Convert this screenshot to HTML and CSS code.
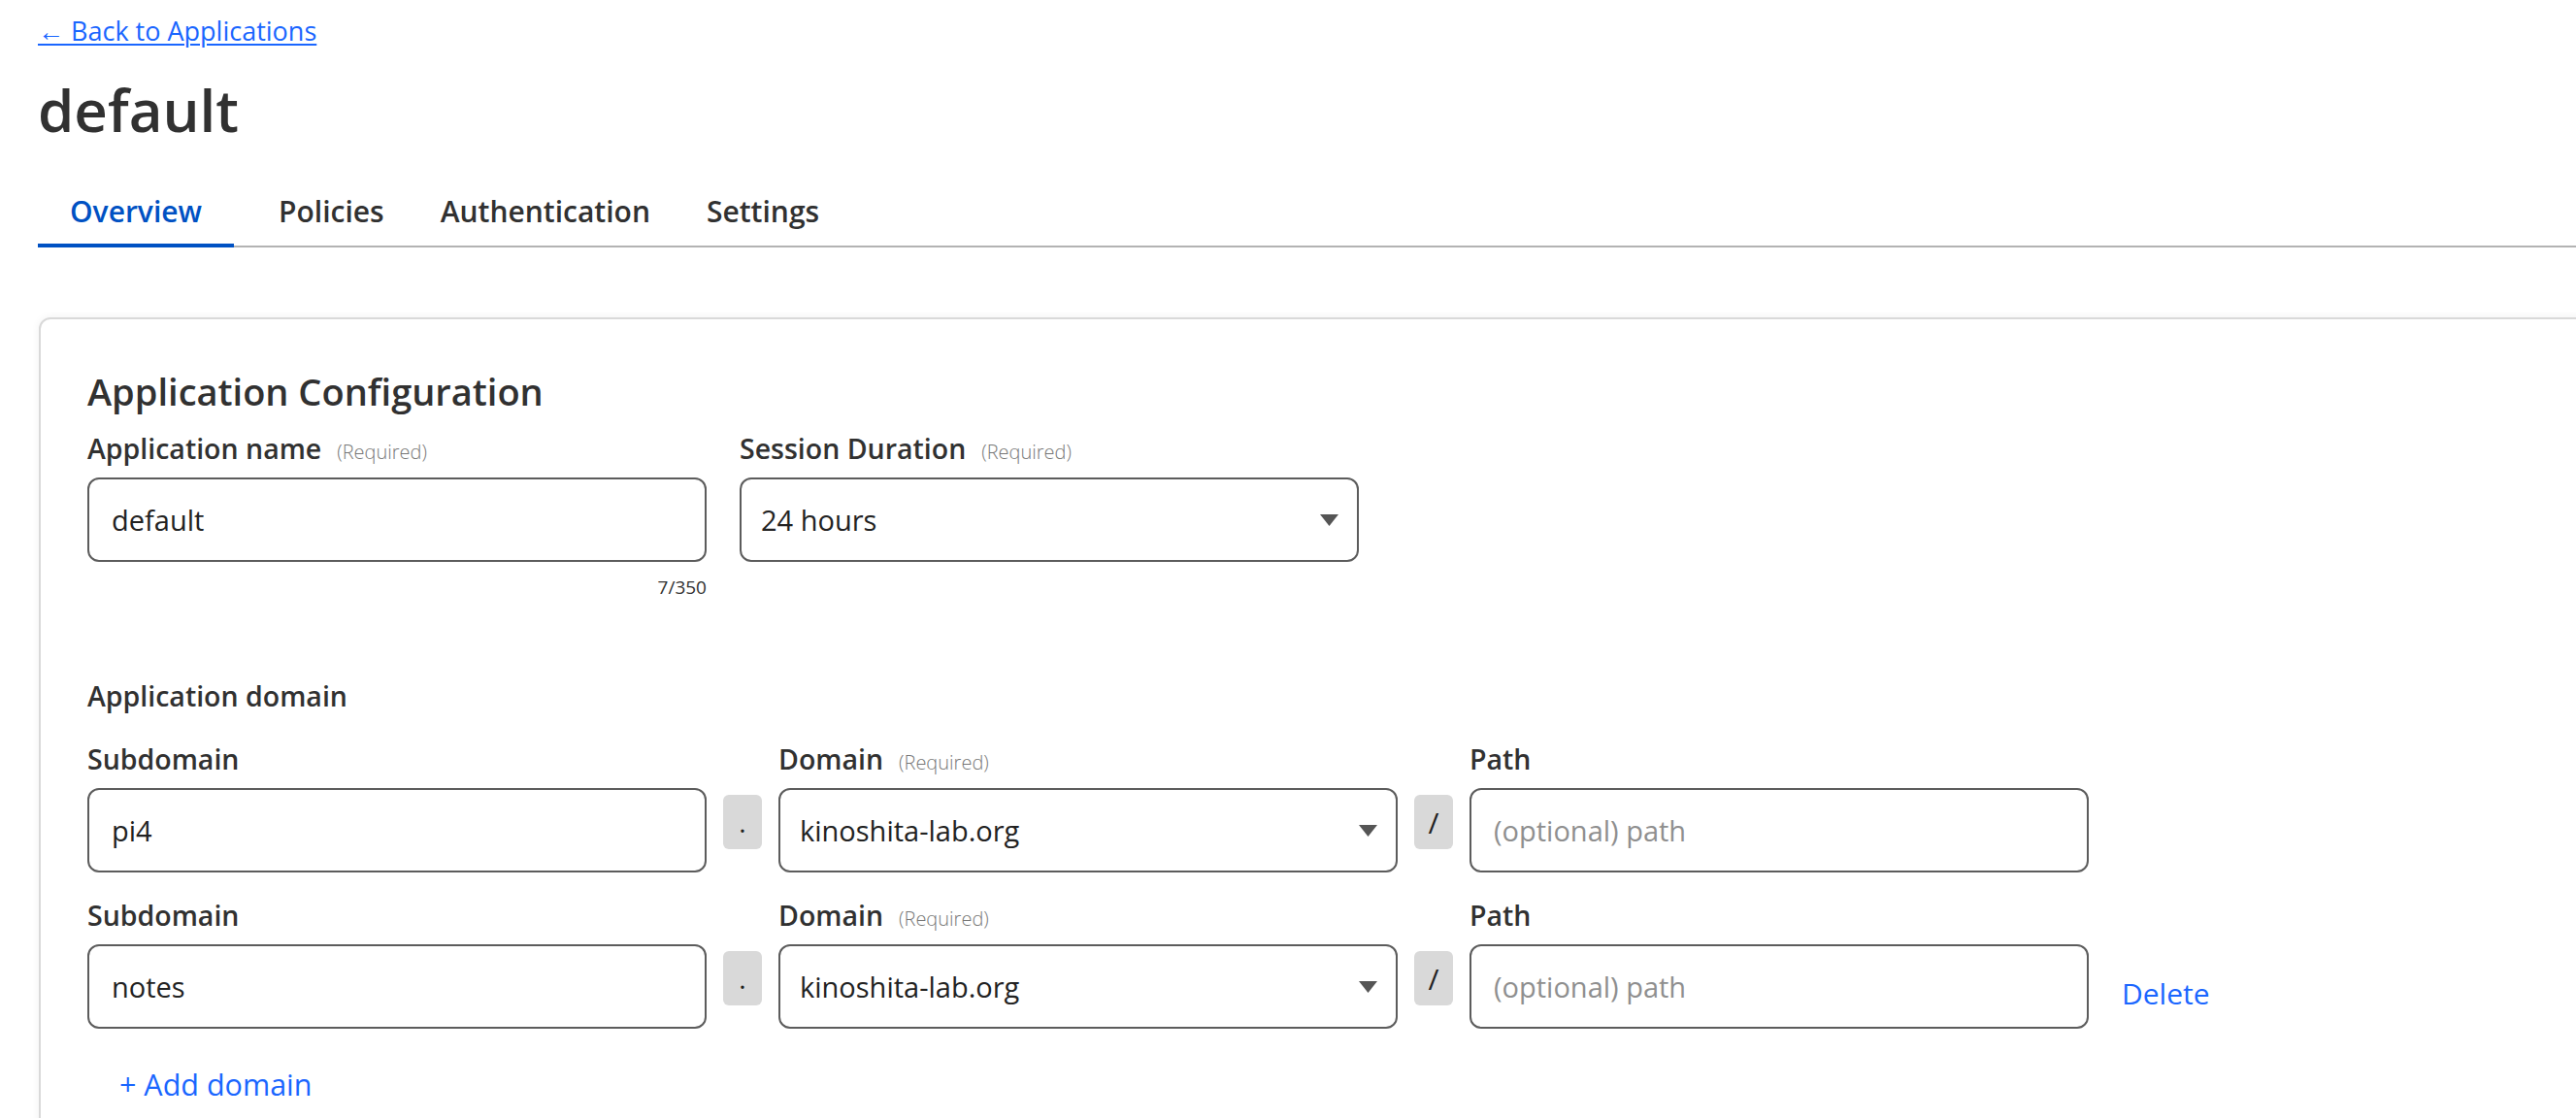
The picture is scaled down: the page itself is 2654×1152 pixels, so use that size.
FILE: index.html
```html
<!DOCTYPE html>
<html lang="en">
<head>
<meta charset="utf-8">
<title>default</title>
<link rel="stylesheet" href="styles.css">
</head>
<body>
<div class="page">
  <a class="back" href="#">← Back to Applications</a>
  <h1 class="title">default</h1>
  <nav class="tabs">
    <a class="tab active" href="#">Overview</a>
    <a class="tab" href="#">Policies</a>
    <a class="tab" href="#">Authentication</a>
    <a class="tab" href="#">Settings</a>
  </nav>
  <section class="card">
    <h2 class="card-title">Application Configuration</h2>
    <div class="row-top">
      <div class="field">
        <label class="label">Application name<span class="req">(Required)</span></label>
        <input class="input" type="text" value="default">
        <div class="counter">7/350</div>
      </div>
      <div class="field">
        <label class="label">Session Duration<span class="req">(Required)</span></label>
        <div class="select">
          <span>24 hours</span>
          <svg class="caret" width="19" height="12" viewBox="0 0 19 12"><polygon points="0,0 19,0 9.5,12" fill="#555"/></svg>
        </div>
      </div>
    </div>

    <div class="section-label">Application domain</div>

    <div class="domain-row first">
      <div class="field">
        <label class="label">Subdomain</label>
        <input class="input" type="text" value="pi4">
      </div>
      <div class="sep">.</div>
      <div class="field">
        <label class="label">Domain<span class="req">(Required)</span></label>
        <div class="select">
          <span>kinoshita-lab.org</span>
          <svg class="caret" width="19" height="12" viewBox="0 0 19 12"><polygon points="0,0 19,0 9.5,12" fill="#555"/></svg>
        </div>
      </div>
      <div class="sep slash">/</div>
      <div class="field">
        <label class="label">Path</label>
        <input class="input" type="text" placeholder="(optional) path">
      </div>
    </div>

    <div class="domain-row second">
      <div class="field">
        <label class="label">Subdomain</label>
        <input class="input" type="text" value="notes">
      </div>
      <div class="sep">.</div>
      <div class="field">
        <label class="label">Domain<span class="req">(Required)</span></label>
        <div class="select">
          <span>kinoshita-lab.org</span>
          <svg class="caret" width="19" height="12" viewBox="0 0 19 12"><polygon points="0,0 19,0 9.5,12" fill="#555"/></svg>
        </div>
      </div>
      <div class="sep slash">/</div>
      <div class="field">
        <label class="label">Path</label>
        <input class="input" type="text" placeholder="(optional) path">
      </div>
      <a class="delete" href="#">Delete</a>
    </div>

    <a class="add" href="#">+ Add domain</a>
  </section>
</div>
</body>
</html>
```

FILE: styles.css
```css
* {
  box-sizing: border-box;
}

html,
body {
  margin: 0;
  background: #ffffff;
}

body {
  font-family: "Open Sans", "Liberation Sans", "DejaVu Sans", sans-serif;
  color: #313131;
  overflow: hidden;
}

.page {
  padding: 14px 0 0 39px;
}

.back {
  display: block;
  width: fit-content;
  font-size: 27px;
  line-height: 36px;
  color: #1a66ff;
  text-decoration: underline;
  text-decoration-thickness: 2px;
  text-underline-offset: 3px;
}

.title {
  margin: 23px 0 0;
  font-size: 60px;
  line-height: 80px;
  font-weight: 600;
  color: #313131;
}

.tabs {
  display: flex;
  margin-top: 45px;
  border-bottom: 2px solid #b3b3b3;
}

.tab {
  font-size: 30px;
  line-height: 40px;
  font-weight: 600;
  color: #313131;
  text-decoration: none;
  padding: 0 29px 13px;
  border-bottom: 4px solid transparent;
  margin-bottom: -2px;
}

.tab.active {
  color: #0051c3;
  border-bottom-color: #0051c3;
  padding: 0 33px 13px;
  margin-right: 17px;
}

.card {
  margin: 72px -80px 0 1px;
  border: 2px solid #d9d9d9;
  border-radius: 12px;
  padding: 49px 48px 60px;
  box-shadow: 0 0 8px rgba(0, 0, 0, 0.06);
  background: #ffffff;
}

.card-title {
  margin: 0 0 16px;
  font-size: 38px;
  line-height: 50px;
  font-weight: 600;
  color: #313131;
}

.row-top {
  display: flex;
  gap: 34px;
}

.field {
  width: 638px;
  flex: none;
}

.label {
  display: block;
  height: 36px;
  font-size: 28.5px;
  line-height: 36px;
  font-weight: 600;
  color: #313131;
  margin-bottom: 12px;
  white-space: nowrap;
}

.req {
  font-size: 20px;
  line-height: 20px;
  font-weight: 300;
  color: #777777;
  margin-left: 16px;
}

.input {
  display: block;
  width: 100%;
  height: 87px;
  margin: 0;
  border: 2px solid #5c5c5c;
  border-radius: 12px;
  padding: 0 23px;
  font-family: "Open Sans", "Liberation Sans", sans-serif;
  font-size: 29px;
  font-weight: 400;
  color: #222222;
  background: #ffffff;
  outline: none;
}

.input::placeholder {
  color: #8f8f8f;
}

.counter {
  text-align: right;
  font-size: 19px;
  line-height: 24px;
  margin-top: 14px;
  color: #313131;
}

.select {
  display: flex;
  align-items: center;
  justify-content: space-between;
  height: 87px;
  border: 2px solid #5c5c5c;
  border-radius: 12px;
  padding: 0 19px 0 20px;
  font-size: 29px;
  color: #222222;
  background: #ffffff;
}

.caret {
  display: block;
  flex: none;
}

.section-label {
  margin-top: 82px;
  height: 36px;
  font-size: 28.5px;
  line-height: 36px;
  font-weight: 600;
  color: #313131;
}

.domain-row {
  display: flex;
  align-items: flex-start;
}

.domain-row.first {
  margin-top: 29px;
}

.domain-row.second {
  margin-top: 26px;
}

.sep {
  flex: none;
  width: 40px;
  height: 56px;
  margin: 55px 17px 0;
  background: #d9d9d9;
  border-radius: 6px;
  display: flex;
  align-items: center;
  justify-content: center;
  font-size: 28px;
  color: #222222;
}

.sep.slash {
  font-size: 30px;
}

.delete {
  margin: 81px 0 0 34px;
  font-size: 30px;
  line-height: 36px;
  color: #1a66ff;
  text-decoration: none;
}

.add {
  display: block;
  width: fit-content;
  margin: 39px 0 0 33px;
  font-size: 30.5px;
  line-height: 36px;
  color: #1a66ff;
  text-decoration: none;
}
```
